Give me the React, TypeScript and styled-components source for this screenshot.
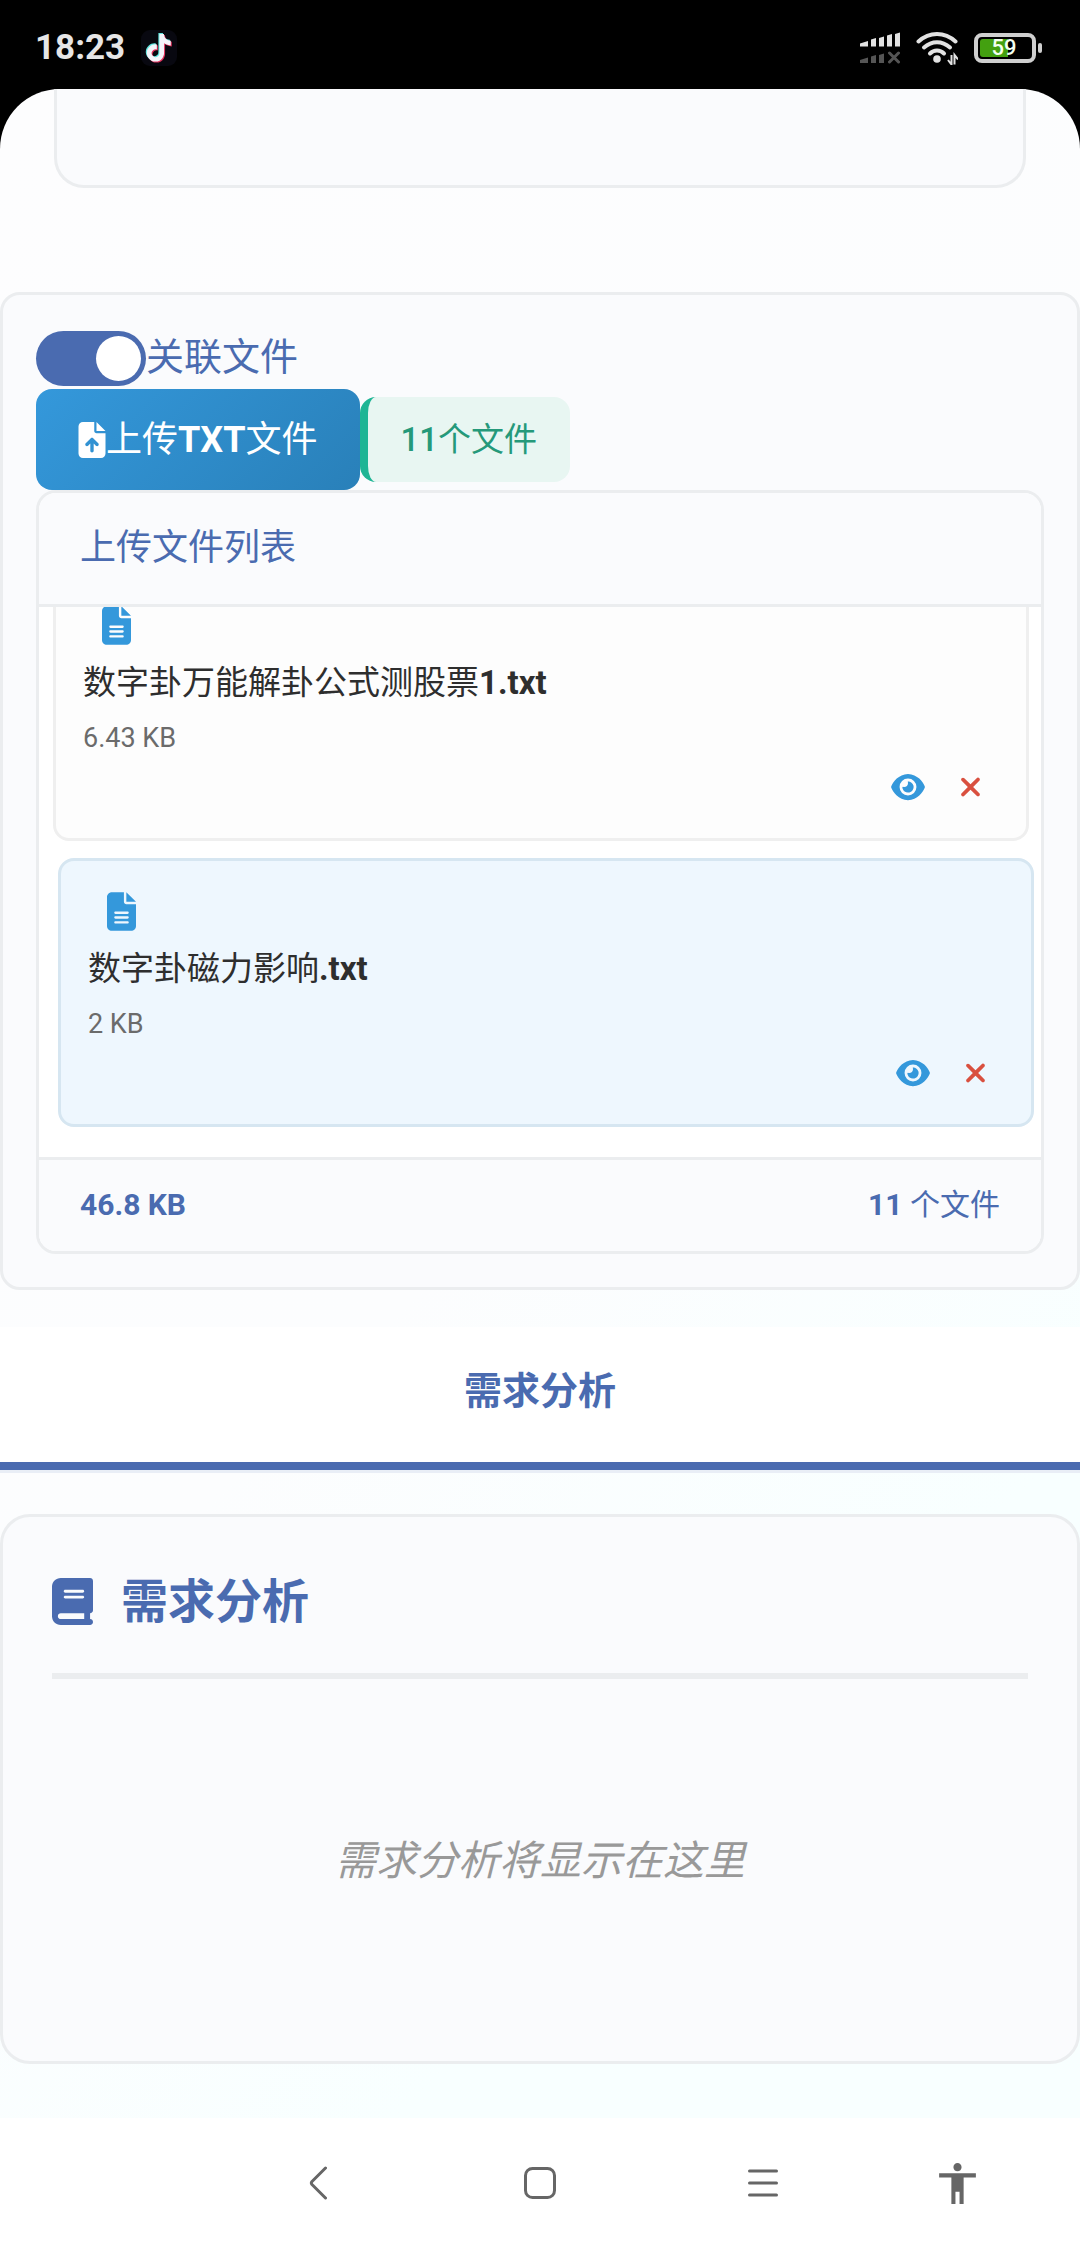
import React, { useLayoutEffect, useRef, useState } from "react";
import styled, { createGlobalStyle } from "styled-components";
import { FaBook, FaEye, FaFileArrowUp, FaFileLines, FaXmark } from "react-icons/fa6";
import { MdAccessibility } from "react-icons/md";

const color = {
  brand: "#4a6bb0",
  sky: "#3498db",
  skyDark: "#2980b9",
  line: "#ebedef",
  panel: "#fafbfd",
  text: "#2e2e2e",
  muted: "#6b6b6b",
};

const GlobalStyle = createGlobalStyle`
  *, *::before, *::after { box-sizing: border-box; }
  body {
    margin: 0;
    background: #000;
    font-family: Roboto, "Noto Sans CJK SC", sans-serif;
    color: ${color.text};
  }
  button, input { font: inherit; margin: 0; }
  button { border: 0; background: none; padding: 0; cursor: pointer; }
  h2, h3, p { margin: 0; font-weight: 400; }
  svg { display: block; }
`;

const Screen = styled.div`
  min-height: 100vh;
  display: flex;
  flex-direction: column;
`;

const StatusBar = styled.header`
  height: 89px;
  padding: 6px 38px 0 35px;
  display: flex;
  align-items: center;
  justify-content: space-between;
  color: #e6e6e6;
`;

const StatusGroup = styled.div`
  display: flex;
  align-items: center;
  gap: 16px;
`;

const Clock = styled.time`
  font-size: 35px;
  line-height: 40px;
  font-weight: 700;
`;

const Battery = styled.div`
  display: flex;
  align-items: center;
  gap: 2px;

  &::after {
    content: "";
    width: 4px;
    height: 10px;
    border-radius: 2px;
    background: #cfcfcf;
  }
`;

const BatteryBody = styled.div`
  width: 62px;
  height: 30px;
  padding: 2px 4px 2px 2px;
  border: 4px solid #cfcfcf;
  border-radius: 8px;
`;

const BatteryLevel = styled.div`
  height: 100%;
  border-radius: 3px;
  background: linear-gradient(90deg, #43a010 59%, transparent 59%);
  color: #f4fff0;
  font-size: 22px;
  line-height: 18px;
  font-weight: 500;
  text-align: center;
`;

const Page = styled.main`
  flex: 1;
  display: flex;
  flex-direction: column;
  overflow: hidden;
  border-radius: 60px 60px 0 0;
  background: linear-gradient(135deg, #fdfdfe 0%, #fcfdfe 50%, #f8ffff 75%);
`;

const PreviousPanel = styled.div`
  height: 99px;
  margin: 0 54px 104px;
  border: 3px solid ${color.line};
  border-top: 0;
  border-radius: 0 0 30px 30px;
  background: ${color.panel};
`;

const FilesPanel = styled.section`
  padding: 33px;
  border: 3px solid ${color.line};
  border-radius: 20px;
  background: ${color.panel};
`;

const SwitchRow = styled.div`
  height: 61px;
  display: flex;
  align-items: center;
`;

const Switch = styled.input`
  appearance: none;
  width: 110px;
  height: 55px;
  padding: 5px;
  display: flex;
  justify-content: flex-start;
  border-radius: 28px;
  background: #c8ccd4;
  cursor: pointer;

  &::before {
    content: "";
    width: 45px;
    height: 45px;
    border-radius: 50%;
    background: #fff;
  }

  &:checked {
    justify-content: flex-end;
    background: ${color.brand};
  }
`;

const SwitchLabel = styled.label`
  padding-bottom: 3px;
  color: ${color.brand};
  font-size: 38px;
  line-height: 56px;
`;

const UploadRow = styled.div`
  display: flex;
  align-items: center;
`;

const UploadButton = styled.button`
  height: 101px;
  padding: 0 42px;
  display: flex;
  align-items: center;
  border-radius: 16px;
  background: linear-gradient(135deg, ${color.sky}, ${color.skyDark});
  color: #fff;
  font-size: 36px;
  line-height: 52px;
`;

const CountBadge = styled.span`
  padding: 0 33px;
  border-left: 8px solid #1fb595;
  border-radius: 16px;
  background: #e8f6f2;
  color: #25997a;
  font-size: 33px;
  line-height: 85px;
`;

const Glyph = styled.span<{ $width: number }>`
  flex: none;

  svg {
    width: ${(p) => p.$width}px;
  }
`;

const Medium = styled.span`
  font-weight: 500;
`;

const Strong = styled.strong`
  font-weight: 700;
`;

const FileList = styled.div`
  border: 3px solid ${color.line};
  border-radius: 20px;
  overflow: hidden;
  background: #fff;
`;

const ListHeader = styled.h3`
  padding: 29px 41px 30px;
  border-bottom: 3px solid ${color.line};
  background: ${color.panel};
  color: ${color.brand};
  font-size: 36px;
  line-height: 52px;
`;

const ListBody = styled.ul`
  height: 550px;
  margin: 0;
  padding: 14px 12px 30px 14px;
  display: flex;
  flex-direction: column;
  gap: 17px;
  overflow-y: auto;
  scrollbar-width: none;
  list-style: none;
`;

const FileCard = styled.li<{ $active?: boolean }>`
  flex: none;
  padding: 27px;
  display: flex;
  flex-direction: column;
  border: 3px solid ${(p) => (p.$active ? "#d6e6f1" : "#efefef")};
  border-radius: 16px;
  background: ${(p) => (p.$active ? "#eef7fe" : "#fdfdfd")};
  transform: ${(p) => (p.$active ? "translateX(5px)" : "none")};
`;

const FileIcon = styled.span`
  height: 47px;
  padding-left: 19px;
  display: flex;
  align-items: center;
  color: ${color.sky};
`;

const FileName = styled.span`
  margin-top: 9px;
  font-size: 33px;
  line-height: 50px;
`;

const FileSize = styled.span`
  margin: 10px 0 5px;
  color: ${color.muted};
  font-size: 27px;
  line-height: 40px;
`;

const Actions = styled.div`
  display: flex;
  justify-content: flex-end;
`;

const ActionButton = styled.button<{ $danger?: boolean }>`
  height: 48px;
  padding: 0 17px;
  display: flex;
  align-items: center;
  color: ${(p) => (p.$danger ? "#d9503f" : color.sky)};
`;

const ListFooter = styled.div`
  padding: 23px 41px 24px;
  display: flex;
  justify-content: space-between;
  border-top: 3px solid ${color.line};
  background: ${color.panel};
  color: ${color.brand};
  font-size: 30px;
  line-height: 44px;
`;

const Tabs = styled.div`
  margin: 37px 0 41px;
  display: flex;
  border-bottom: 3px solid #e9eef6;
  background: #fff;
`;

const Tab = styled.button`
  flex: 1;
  padding: 36px 0 43px;
  border-bottom: 8px solid ${color.brand};
  color: ${color.brand};
  font-size: 38px;
  line-height: 56px;
  font-weight: 700;
`;

const AnalysisPanel = styled.section`
  padding: 49px;
  border: 3px solid ${color.line};
  border-radius: 30px;
  background: ${color.panel};
`;

const PanelTitle = styled.h2`
  padding-bottom: 36px;
  display: flex;
  align-items: center;
  gap: 28px;
  border-bottom: 6px solid ${color.line};
  color: ${color.brand};
  font-size: 47px;
  line-height: 71px;
  font-weight: 700;
`;

const Placeholder = styled.p`
  margin-top: 30px;
  min-height: 303px;
  display: flex;
  align-items: center;
  justify-content: center;
  color: #999;
  font-size: 41px;
  line-height: 60px;
  font-style: italic;
`;

const NavBar = styled.nav`
  height: 130px;
  margin-top: auto;
  padding: 0 4% 0 19%;
  display: grid;
  grid-template-columns: 226fr 218fr 229fr 159fr;
  align-items: center;
  background: #fff;
`;

const NavButton = styled.button`
  height: 100%;
  display: flex;
  align-items: center;
  justify-content: center;
  color: #666;
`;

const TIKTOK =
  "M12.525.02c1.31-.02 2.61-.01 3.91-.02.08 1.53.63 3.09 1.75 4.17 1.12 1.11 2.7 1.62 4.24 1.79v4.03c-1.44-.05-2.89-.35-4.2-.97-.57-.26-1.1-.59-1.62-.93-.01 2.92.01 5.84-.02 8.75-.08 1.4-.54 2.79-1.35 3.94-1.31 1.92-3.58 3.17-5.91 3.21-1.43.08-2.86-.31-4.08-1.03-2.02-1.19-3.44-3.37-3.65-5.71-.02-.5-.03-1-.01-1.49.18-1.9 1.12-3.72 2.58-4.96 1.66-1.44 3.98-2.13 6.15-1.72.02 1.48-.04 2.96-.04 4.44-.99-.32-2.15-.23-3.02.37-.63.41-1.11 1.04-1.36 1.75-.21.51-.15 1.07-.14 1.61.24 1.64 1.82 3.02 3.5 2.87 1.12-.01 2.19-.66 2.77-1.61.19-.33.4-.67.41-1.06.1-1.79.06-3.57.07-5.36.01-4.03-.01-8.05.02-12.07z";

const TikTokIcon = () => (
  <svg width="36" height="36" viewBox="0 0 36 36" aria-hidden="true">
    <rect width="36" height="36" rx="9" fill="#080810" />
    <g transform="translate(4 4)">
      <path d={TIKTOK} transform="translate(-1 -1) scale(1.15)" fill="#5fe6e0" />
      <path d={TIKTOK} transform="translate(1 1) scale(1.15)" fill="#e0315c" />
      <path d={TIKTOK} transform="scale(1.15)" fill="#f4f4fa" />
    </g>
  </svg>
);

const SignalIcon = () => (
  <svg width="40" height="32" viewBox="0 0 40 32" aria-hidden="true">
    <g fill="#e2e2e2">
      <path d="M0 11.5 8 9v5.500H0z" />
      <path d="M11 7.500 16 6v8.500h-5z" />
      <path d="M19 6l5-1.500v10h-5z" />
      <path d="M27 3.500 32 2v12.500h-5z" />
      <path d="M35 2l5-1.500v14h-5z" />
    </g>
    <g fill="#555">
      <path d="M0 28l8-2.500V31H0z" />
      <path d="M11 24.500l5-1.500v8h-5z" />
      <path d="M19 23l5-1.500V31h-5z" />
    </g>
    <path d="M29.500 21l9 9M38.500 21l-9 9" stroke="#555" strokeWidth="3" strokeLinecap="round" />
  </svg>
);

const WifiIcon = () => (
  <svg width="42" height="34" viewBox="0 0 42 34" aria-hidden="true">
    <g fill="none" stroke="#e2e2e2" strokeWidth="4" strokeLinecap="round">
      <path d="M2.500 10.500c11-10 26-10 37 0" />
      <path d="M8 16.500c8-7 18-7 26 0" />
      <path d="M14 22.500c4-4 10-4 14 0" />
    </g>
    <circle cx="21" cy="28" r="3.800" fill="#e2e2e2" />
    <path d="M35.500 24v9.500l-3.500-4.500M38.500 33.500V24l3.500 4.500" fill="none" stroke="#e2e2e2" strokeWidth="2" />
  </svg>
);

const strokeProps = {
  fill: "none",
  stroke: "currentColor",
  strokeWidth: 3,
  strokeLinecap: "round" as const,
  strokeLinejoin: "round" as const,
};

const BackIcon = () => (
  <svg width="18" height="34" viewBox="0 0 18 34" aria-hidden="true">
    <path d="M16.500 2 3 15.500q-1.300 1.500 0 3L16.500 32" {...strokeProps} />
  </svg>
);

const HomeIcon = () => (
  <svg width="32" height="32" viewBox="0 0 32 32" aria-hidden="true">
    <rect x="1.500" y="1.500" width="29" height="29" rx="7" {...strokeProps} />
  </svg>
);

const MenuIcon = () => (
  <svg width="30" height="28" viewBox="0 0 30 28" aria-hidden="true">
    <path d="M1.500 2h27M1.500 14h27M1.500 26h27" {...strokeProps} />
  </svg>
);

type FileEntry = { id: number; base: string; latin: string; size: string; active?: boolean };

const files: FileEntry[] = [
  { id: 10, base: "数字卦万能解卦公式测股票", latin: "1.txt", size: "6.43 KB" },
  { id: 11, base: "数字卦磁力影响", latin: ".txt", size: "2 KB", active: true },
];

export default function App() {
  const [linked, setLinked] = useState(true);
  const listRef = useRef<HTMLUListElement>(null);

  useLayoutEffect(() => {
    const list = listRef.current;
    if (list) list.scrollTop = list.scrollHeight;
  }, []);

  return (
    <Screen>
      <GlobalStyle />
      <StatusBar>
        <StatusGroup>
          <Clock>18:23</Clock>
          <TikTokIcon />
        </StatusGroup>
        <StatusGroup>
          <SignalIcon />
          <WifiIcon />
          <Battery>
            <BatteryBody>
              <BatteryLevel>59</BatteryLevel>
            </BatteryBody>
          </Battery>
        </StatusGroup>
      </StatusBar>

      <Page>
        <PreviousPanel />

        <FilesPanel>
          <SwitchRow>
            <Switch
              id="link-files"
              type="checkbox"
              checked={linked}
              onChange={(e) => setLinked(e.target.checked)}
            />
            <SwitchLabel htmlFor="link-files">关联文件</SwitchLabel>
          </SwitchRow>
          <UploadRow>
            <UploadButton type="button">
              <Glyph $width={28}>
                <FaFileArrowUp size={36} />
              </Glyph>
              <span>
                上传<Strong>TXT</Strong>文件
              </span>
            </UploadButton>
            <CountBadge>
              <Medium>11</Medium>个文件
            </CountBadge>
          </UploadRow>

          <FileList>
            <ListHeader>上传文件列表</ListHeader>
            <ListBody ref={listRef}>
              {files.map((file) => (
                <FileCard key={file.id} $active={file.active}>
                  <FileIcon>
                    <Glyph $width={29}>
                      <FaFileLines size={39} />
                    </Glyph>
                  </FileIcon>
                  <FileName>
                    {file.base}
                    <Strong>{file.latin}</Strong>
                  </FileName>
                  <FileSize>{file.size}</FileSize>
                  <Actions>
                    <ActionButton type="button" aria-label="预览">
                      <Glyph $width={34}>
                        <FaEye size={30} />
                      </Glyph>
                    </ActionButton>
                    <ActionButton type="button" aria-label="删除" $danger>
                      <Glyph $width={23}>
                        <FaXmark size={30} />
                      </Glyph>
                    </ActionButton>
                  </Actions>
                </FileCard>
              ))}
            </ListBody>
            <ListFooter>
              <Strong>46.8 KB</Strong>
              <span>
                <Strong>11</Strong> 个文件
              </span>
            </ListFooter>
          </FileList>
        </FilesPanel>

        <Tabs role="tablist">
          <Tab type="button" role="tab" aria-selected="true">
            需求分析
          </Tab>
        </Tabs>

        <AnalysisPanel>
          <PanelTitle>
            <Glyph $width={41}>
              <FaBook size={47} />
            </Glyph>
            需求分析
          </PanelTitle>
          <Placeholder>需求分析将显示在这里</Placeholder>
        </AnalysisPanel>

        <NavBar>
          <NavButton type="button" aria-label="返回">
            <BackIcon />
          </NavButton>
          <NavButton type="button" aria-label="主页">
            <HomeIcon />
          </NavButton>
          <NavButton type="button" aria-label="菜单">
            <MenuIcon />
          </NavButton>
          <NavButton type="button" aria-label="无障碍">
            <MdAccessibility size={49} />
          </NavButton>
        </NavBar>
      </Page>
    </Screen>
  );
}
